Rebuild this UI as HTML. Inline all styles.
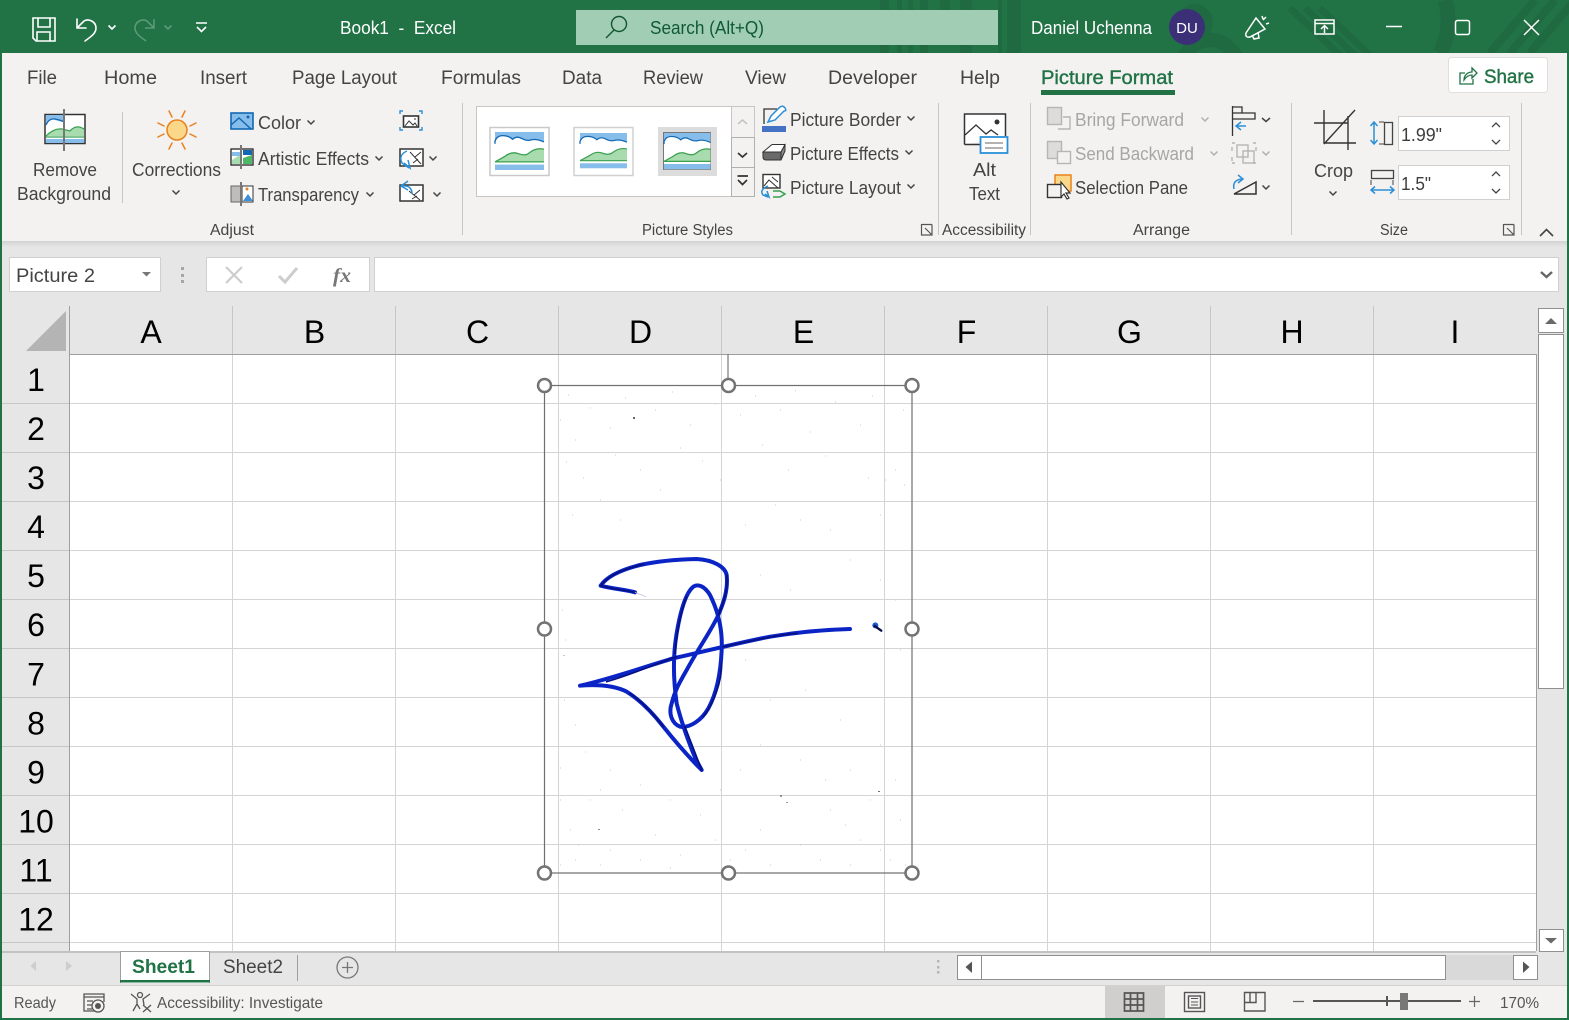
<!DOCTYPE html>
<html lang="en">
<head>
<meta charset="utf-8">
<title>Book1 - Excel</title>
<style>
html,body{margin:0;padding:0;background:#e6e6e6;width:1569px;height:1020px;overflow:hidden}
svg{display:block;font-family:"Liberation Sans",sans-serif}
text{white-space:pre}
.t{font-size:19px;fill:#444}
.r{font-size:18px;fill:#444}
.g{font-size:15.5px;fill:#444}
.d{font-size:18px;fill:#a6a6a6}
.h{font-size:32px;fill:#000;text-anchor:middle}
.w{font-size:18px;fill:#fff}
.s{font-size:16px;fill:#555}
</style>
</head>
<body>
<svg width="1569" height="1020" viewBox="0 0 1569 1020" xmlns="http://www.w3.org/2000/svg">
<defs>
<linearGradient id="shadow" x1="0" y1="0" x2="0" y2="1"><stop offset="0" stop-color="#d2d2d2"/><stop offset="1" stop-color="#e6e6e6"/></linearGradient>
<g id="thumb">
<rect x="0" y="0" width="50" height="42" fill="#fff"/>
<rect x="0" y="0" width="50" height="14" fill="#86bdea"/>
<path d="M0 14V10Q2 4 8 4T18 8Q22 4 27 7T36 9Q42 7 50 11V42H0Z" fill="#fff"/>
<path d="M0 13V10Q2 4 8 4T18 8Q22 4 27 7T36 9Q42 7 50 11" fill="none" stroke="#1268b3" stroke-width="1.400"/>
<path d="M0 33L10 27Q17 21 24 24T35 23Q42 17 50 19V33Z" fill="#a8dcae"/>
<path d="M0 33L10 27Q17 21 24 24T35 23Q42 17 50 19M0 33H50" fill="none" stroke="#38a04f" stroke-width="1.400"/>
<rect x="0" y="36" width="50" height="6" fill="#86bdea"/>
</g>
<symbol id="chev" viewBox="0 0 8 5" overflow="visible"><path d="M.5 .5L4 4L7.5 .5" fill="none" stroke="#444" stroke-width="1.500"/></symbol>
<symbol id="chevd" viewBox="0 0 8 5" overflow="visible"><path d="M.5 .5L4 4L7.5 .5" fill="none" stroke="#b0b0b0" stroke-width="1.500"/></symbol>
</defs>

<!-- base -->
<rect width="1569" height="1020" fill="#217346"/>
<!-- title pattern -->
<g fill="#1f6a41">
<rect x="880" y="0" width="9" height="53"/><rect x="897" y="0" width="5" height="53"/><rect x="908" y="0" width="5" height="53"/><rect x="920" y="0" width="8" height="53"/>
<rect x="940" y="0" width="10" height="18"/><rect x="960" y="0" width="12" height="53"/><rect x="998" y="0" width="4" height="53"/>
<rect x="1007" y="0" width="14" height="53"/>
<circle cx="1195" cy="22" r="18"/>
</g>
<g fill="none" stroke="#1f6a41">
<circle cx="1210" cy="68" r="28" stroke-width="14"/>
<path d="M1290 8L1345 60M1305 8L1360 60M1320 8L1375 60" stroke-width="7"/>
<path d="M1445 0A70 70 0 0 1 1440 53" stroke-width="15"/>
<path d="M1490 53L1535 0M1510 53L1555 0M1530 53L1575 0" stroke-width="8"/>
</g>

<!-- QAT -->
<g fill="none" stroke="#fff" stroke-width="1.600">
<path d="M33 18H55V41H36L33 38Z"/><path d="M38 18V27H50V18M37 41V32H50V41"/>
<path d="M77 19V28H86M78 27L84 21C89 18 96 22 96 28C96 33 92 36 85 41" stroke-linecap="round"/>
<path d="M108.500 25.500L112 29L115.500 25.500"/>
<g stroke="#5b9a78"><path d="M154 19V28H145M153 27L147 21C142 18 135 22 135 28C135 33 139 36 146 41"/><path d="M164.500 25.500L168 29L171.500 25.500"/></g>
<path d="M196 23H207M197 27L201.500 31.500L206 27"/>
</g>
<text class="w" x="340" y="34" textLength="116" lengthAdjust="spacingAndGlyphs">Book1  -  Excel</text>
<rect x="576" y="10" width="422" height="35" fill="#a0cdb3"/>
<g fill="none" stroke="#12552f" stroke-width="1.400"><circle cx="619" cy="24" r="7.500"/><path d="M614 30L606 38"/></g>
<text x="650" y="34" font-size="18" fill="#0f5a34" textLength="114" lengthAdjust="spacingAndGlyphs">Search (Alt+Q)</text>
<text class="w" x="1031" y="34" textLength="121" lengthAdjust="spacingAndGlyphs">Daniel Uchenna</text>
<circle cx="1187" cy="27" r="18" fill="#3b3078"/>
<text x="1187" y="33" font-size="15" fill="#fff" text-anchor="middle">DU</text>
<g fill="none" stroke="#fff" stroke-width="1.500">
<path d="M1246 33L1256 18L1265 29L1250 37Q1245 38 1246 33ZM1252 35L1254 39L1259 38L1258 32"/>
<path d="M1263 20L1266 17M1266 24L1269 23M1262 16L1263 19"/>
<path d="M1315 20H1334V34H1315ZM1315 23.500H1334M1324.500 33V26M1321 29L1324.500 25.500L1328 29"/>
<path d="M1386 26.500H1402"/>
<rect x="1455.500" y="20.500" width="14" height="14" rx="2"/>
<path d="M1524 20L1539 35M1539 20L1524 35"/>
</g>

<!-- ribbon -->
<rect x="2" y="53" width="1565" height="188" fill="#f3f2f1"/>
<rect x="2" y="241" width="1565" height="6" fill="url(#shadow)"/>
<rect x="2" y="247" width="1565" height="771" fill="#e6e6e6"/>

<text class="t" x="27" y="84" textLength="30" lengthAdjust="spacingAndGlyphs">File</text>
<text class="t" x="104" y="84" textLength="53" lengthAdjust="spacingAndGlyphs">Home</text>
<text class="t" x="200" y="84" textLength="47" lengthAdjust="spacingAndGlyphs">Insert</text>
<text class="t" x="292" y="84" textLength="105" lengthAdjust="spacingAndGlyphs">Page Layout</text>
<text class="t" x="441" y="84" textLength="80" lengthAdjust="spacingAndGlyphs">Formulas</text>
<text class="t" x="562" y="84" textLength="40" lengthAdjust="spacingAndGlyphs">Data</text>
<text class="t" x="643" y="84" textLength="60" lengthAdjust="spacingAndGlyphs">Review</text>
<text class="t" x="745" y="84" textLength="41" lengthAdjust="spacingAndGlyphs">View</text>
<text class="t" x="828" y="84" textLength="89" lengthAdjust="spacingAndGlyphs">Developer</text>
<text class="t" x="960" y="84" textLength="40" lengthAdjust="spacingAndGlyphs">Help</text>
<text x="1041" y="84" font-size="19" fill="#217346" stroke="#217346" stroke-width=".4" textLength="132" lengthAdjust="spacingAndGlyphs">Picture Format</text>
<rect x="1041" y="90" width="134" height="5" fill="#217346"/>
<rect x="1448.500" y="57.500" width="99" height="35" rx="3" fill="#fff" stroke="#e1dfdd"/>
<g fill="none" stroke="#217346" stroke-width="1.300"><path d="M1465 73H1460V84H1473V79"/><path d="M1464 80C1464 75 1468 72 1472 72V68L1477 73L1472 78V75C1469 75 1466 77 1464 80Z"/></g>
<text x="1484" y="83" font-size="19" fill="#217346" stroke="#217346" stroke-width=".4" textLength="50" lengthAdjust="spacingAndGlyphs">Share</text>

<!-- separators -->
<g stroke="#c8c6c4" stroke-width="1" fill="none">
<path d="M122.500 112V203M462.500 103V235M938.500 103V235M1030.500 103V235M1291.500 103V235M1521.500 103V235"/>
</g>

<!-- Remove background -->
<rect x="45" y="114.500" width="40" height="29" fill="#fff" stroke="#333" stroke-width="1.500"/>
<rect x="46" y="115" width="18" height="13" fill="#86bdea"/>
<path d="M46 124Q49 118 55 120T64 122V128H46Z" fill="#fff"/>
<path d="M46 125Q49 118 55 119T64 122" fill="none" stroke="#1268b3" stroke-width="1.200"/>
<path d="M46 136Q54 128 62 129L70 131Q76 124 84 129V136Z" fill="#a8dcae"/>
<path d="M46 136Q54 128 62 129L70 131Q76 124 84 129M46 137H84" fill="none" stroke="#38a04f" stroke-width="1.200"/>
<rect x="46" y="139" width="38" height="4" fill="#86bdea"/>
<rect x="63" y="109" width="2" height="42" fill="#777"/>
<text class="r" x="33" y="176" textLength="64" lengthAdjust="spacingAndGlyphs">Remove</text>
<text class="r" x="17" y="200" textLength="94" lengthAdjust="spacingAndGlyphs">Background</text>

<!-- Corrections -->
<circle cx="177" cy="130" r="10" fill="#fbd889" stroke="#e8821e" stroke-width="1.500"/>
<g stroke="#e8821e" stroke-width="1.500" stroke-linecap="round"><path d="M169 111L172 117M185 111L182 117M158 123L164 126M196 123L190 126M158 137L164 134M196 137L190 134M169 149L172 143M185 149L182 143"/></g>
<text class="r" x="132" y="176" textLength="89" lengthAdjust="spacingAndGlyphs">Corrections</text>
<use href="#chev" x="172" y="190" width="8" height="5"/>

<!-- Color etc -->
<rect x="231" y="113" width="22" height="16" fill="#86bdea" stroke="#1268b3" stroke-width="1.600"/>
<path d="M231 125L239 118L251 129" fill="none" stroke="#1268b3" stroke-width="1.400"/><circle cx="248" cy="117" r="1.500" fill="#1268b3"/>
<text class="r" x="258" y="129" textLength="43" lengthAdjust="spacingAndGlyphs">Color</text>
<use href="#chev" x="307" y="120" width="8" height="5"/>
<rect x="231" y="149" width="22" height="16" fill="#fff" stroke="#333" stroke-width="1.400"/>
<path d="M232 160L241 154V164H232Z" fill="#a8dcae"/><path d="M232 152H240V156H232Z" fill="#86bdea"/>
<path d="M243 150H252V155H243Z" fill="#1268b3"/><path d="M243 158L252 155V164H243Z" fill="#4fb866"/>
<rect x="240" y="145" width="2" height="24" fill="#777"/>
<text class="r" x="258" y="165" textLength="111" lengthAdjust="spacingAndGlyphs">Artistic Effects</text>
<use href="#chev" x="375" y="156" width="8" height="5"/>
<rect x="231" y="186" width="10" height="16" fill="#bdbdbd" stroke="#666"/>
<rect x="242" y="186" width="11" height="16" fill="#fff" stroke="#333"/>
<path d="M243 201L248 194L253 201Z" fill="#3d8fd6"/><circle cx="247" cy="189" r="1.500" fill="#e8821e"/>
<rect x="240" y="182" width="2" height="24" fill="#777"/>
<text class="r" x="258" y="201" textLength="101" lengthAdjust="spacingAndGlyphs">Transparency</text>
<use href="#chev" x="366" y="192" width="8" height="5"/>

<!-- right small icons -->
<rect x="403.500" y="116" width="15" height="11" fill="#fff" stroke="#333" stroke-width="1.600"/>
<path d="M405 126L409 121L413 125L415 123L417 126M414 119h2" fill="none" stroke="#333"/>
<path d="M400 114V111H403M419 111H422V114M400 127V130H403M419 130H422V127" fill="none" stroke="#2c8fd6" stroke-width="1.400"/>
<rect x="400" y="149" width="23" height="17" fill="#fff" stroke="#333" stroke-width="1.500"/>
<path d="M410 152L421 164M415 157L421 152M413 163L418 159" fill="none" stroke="#333"/>
<path d="M407 151Q398 155 402 163L409 168M404 163L410 168L408 160" fill="none" stroke="#2c8fd6" stroke-width="1.500"/>
<use href="#chev" x="429" y="156" width="8" height="5"/>
<rect x="400" y="185" width="23" height="16" fill="#fff" stroke="#333" stroke-width="1.500"/>
<path d="M409 191L420 200M414 195L420 190M412 199L417 196" fill="none" stroke="#333"/>
<path d="M408 181L401 186L408 190M402 186Q412 185 412 194" fill="none" stroke="#2c8fd6" stroke-width="1.500"/>
<use href="#chev" x="433" y="192" width="8" height="5"/>
<text class="g" x="210" y="235" textLength="44" lengthAdjust="spacingAndGlyphs">Adjust</text>

<!-- Gallery -->
<rect x="476.500" y="106.500" width="278" height="90" fill="#fff" stroke="#c8c6c4"/>
<rect x="731.500" y="106.500" width="23" height="31" fill="#f3f2f1" stroke="#c8c6c4"/>
<rect x="731.500" y="137.500" width="23" height="30" fill="#f3f2f1" stroke="#b0b0b0"/>
<rect x="731.500" y="167.500" width="23" height="29" fill="#f3f2f1" stroke="#b0b0b0"/>
<path d="M738 124L742.500 120L747 124" fill="none" stroke="#c0c0c0" stroke-width="1.500"/>
<path d="M738 153L742.500 157L747 153" fill="none" stroke="#333" stroke-width="1.700"/>
<path d="M737.500 176H748M738 180L742.500 184.500L747 180" fill="none" stroke="#333" stroke-width="1.700"/>

<rect x="490" y="127.500" width="59" height="48" fill="#fff" stroke="#c9c9c9" stroke-width="1.500"/>
<g transform="translate(495,132) scale(.98,.905)"><use href="#thumb"/></g>
<rect x="574" y="127.500" width="59" height="48" fill="#fff" stroke="#d0d0d0" stroke-width="1.500"/>
<g transform="translate(580,133) scale(.94,.84)"><use href="#thumb"/></g>
<rect x="658" y="127" width="59" height="49" fill="#dcdcdc"/>
<rect x="663.500" y="132.500" width="47" height="37" fill="#fff" stroke="#777"/>
<g transform="translate(664,133) scale(.93,.86)"><use href="#thumb"/></g>

<!-- Picture border etc -->
<rect x="762" y="126" width="24" height="6" fill="#4472c4"/>
<path d="M764 124V109H777" fill="none" stroke="#333" stroke-width="1.300"/>
<path d="M768 122L771 116L780 107Q783 105 785 108T784 111L775 120Z" fill="#fff" stroke="#2c8fd6" stroke-width="1.500"/>
<text class="r" x="790" y="126" textLength="111" lengthAdjust="spacingAndGlyphs">Picture Border</text>
<use href="#chev" x="907" y="116" width="8" height="5"/>
<path d="M763 152L772 144.500H785L781 152L772 153Z" fill="#fff" stroke="#333"/>
<path d="M763 152H781V160H766Q763 160 763 157Z" fill="#6a6a6a" stroke="#333"/>
<path d="M781 152L785 145V151L781 160Z" fill="#8a8a8a" stroke="#333"/>
<text class="r" x="790" y="160" textLength="109" lengthAdjust="spacingAndGlyphs">Picture Effects</text>
<use href="#chev" x="905" y="150" width="8" height="5"/>
<rect x="763" y="174.500" width="17" height="13.500" fill="#fff" stroke="#333" stroke-width="1.400"/>
<path d="M764 186L769 180L778 188M772 177L778 182" fill="none" stroke="#333"/>
<path d="M768 186Q759 190 763 195L768 197M765 194L769 197L767 191" fill="none" stroke="#2c8fd6" stroke-width="1.500"/>
<path d="M773 191H780L785 194L780 197H773" fill="none" stroke="#38a04f" stroke-width="1.500"/>
<text class="r" x="790" y="194" textLength="111" lengthAdjust="spacingAndGlyphs">Picture Layout</text>
<use href="#chev" x="907" y="184" width="8" height="5"/>
<text class="g" x="642" y="235" textLength="91" lengthAdjust="spacingAndGlyphs">Picture Styles</text>
<path d="M921.500 224.500H932M921.500 224V235H932V224.500M925 228L932 235M932 230V235H927" fill="none" stroke="#555" stroke-width="1.200"/>

<!-- Alt text -->
<path d="M964.500 144.500V114H1005.500V136M964.500 144.500H980" fill="#fff" stroke="#333" stroke-width="1.500"/>
<path d="M965 135L976 125L986 134L991 130L998 135" fill="none" stroke="#333" stroke-width="1.300"/>
<circle cx="997" cy="122" r="2.500" fill="#333"/>
<rect x="980.500" y="137" width="27" height="16" fill="#fff" stroke="#2c8fd6" stroke-width="1.800"/>
<path d="M985 143H1003M985 148H1003" stroke="#666"/>
<text class="r" x="973" y="176" textLength="23" lengthAdjust="spacingAndGlyphs">Alt</text>
<text class="r" x="969" y="200" textLength="31" lengthAdjust="spacingAndGlyphs">Text</text>
<text class="g" x="942" y="235" textLength="84" lengthAdjust="spacingAndGlyphs">Accessibility</text>

<!-- Arrange -->
<rect x="1047.500" y="107.500" width="14" height="17" fill="#dcdcdc" stroke="#b5b5b5" stroke-width="1.400"/>
<path d="M1058 129H1070V117H1063" fill="none" stroke="#b5b5b5" stroke-width="1.400"/>
<text class="d" x="1075" y="126" textLength="109" lengthAdjust="spacingAndGlyphs">Bring Forward</text>
<use href="#chevd" x="1201" y="117" width="8" height="5"/>
<rect x="1047.500" y="141.500" width="14" height="17" fill="#dcdcdc" stroke="#b5b5b5" stroke-width="1.400"/>
<rect x="1057.500" y="151.500" width="13" height="12" fill="#f3f2f1" stroke="#b5b5b5" stroke-width="1.400"/>
<text class="d" x="1075" y="160" textLength="119" lengthAdjust="spacingAndGlyphs">Send Backward</text>
<use href="#chevd" x="1210" y="151" width="8" height="5"/>
<rect x="1055" y="175" width="16" height="16" fill="#fbd889" stroke="#e8821e" stroke-width="1.500"/>
<rect x="1047.500" y="184.500" width="14" height="13" fill="#f3f2f1" stroke="#333" stroke-width="1.400"/>
<path d="M1061 182V197L1064 194L1067 199L1069 198L1066 193H1070Z" fill="#fff" stroke="#333" stroke-width="1.200"/>
<text class="r" x="1075" y="194" textLength="113" lengthAdjust="spacingAndGlyphs">Selection Pane</text>
<text class="g" x="1133" y="235" textLength="57" lengthAdjust="spacingAndGlyphs">Arrange</text>
<path d="M1232.500 106V136M1233 113H1242V107H1233M1233 119H1255V113H1233" fill="none" stroke="#333" stroke-width="1.300"/>
<path d="M1236 126H1246M1241 122L1236 126L1241 130" fill="none" stroke="#2c8fd6" stroke-width="1.500"/>
<path d="M1262 118L1266 121.500L1270 118" fill="none" stroke="#444" stroke-width="1.500"/>
<g fill="none" stroke="#b5b5b5" stroke-width="1.400"><rect x="1237" y="145" width="11" height="12"/><rect x="1243" y="151" width="11" height="12"/><path d="M1232 143h3M1253 143h3M1232 163h3M1253 163h3M1232 147v4M1232 157v4M1256 147v4"/></g>
<use href="#chevd" x="1262" y="151" width="8" height="5"/>
<path d="M1234 194L1256 182V194Z" fill="none" stroke="#333" stroke-width="1.500"/>
<path d="M1234 189Q1232 180 1242 179M1238 175L1243 179L1238 183" fill="none" stroke="#2c8fd6" stroke-width="1.500"/>
<use href="#chev" x="1262" y="185" width="8" height="5"/>

<!-- Size -->
<path d="M1314 123H1348M1348 116V150M1324 110V143H1356M1324 144L1355 110" fill="none" stroke="#333" stroke-width="1.400"/>
<text class="r" x="1314" y="177" textLength="39" lengthAdjust="spacingAndGlyphs">Crop</text>
<use href="#chev" x="1329" y="191" width="8" height="5"/>
<rect x="1384.500" y="122.500" width="8" height="22" fill="none" stroke="#444" stroke-width="1.300"/>
<path d="M1379 122H1384M1379 144H1384" stroke="#444"/>
<path d="M1374 123V143M1370.500 126L1374 122L1377.500 126M1370.500 140L1374 144L1377.500 140" fill="none" stroke="#2c8fd6" stroke-width="1.500"/>
<rect x="1371.500" y="170.500" width="22" height="8" fill="none" stroke="#444" stroke-width="1.300"/>
<path d="M1371 180V185M1393 180V185" stroke="#444"/>
<path d="M1372 190H1393M1375 186.500L1371 190L1375 193.500M1390 186.500L1394 190L1390 193.500" fill="none" stroke="#2c8fd6" stroke-width="1.500"/>
<rect x="1398.500" y="116.500" width="111" height="34" fill="#fff" stroke="#d0d0d0"/>
<rect x="1398.500" y="165.500" width="111" height="34" fill="#fff" stroke="#d0d0d0"/>
<text x="1401" y="141" font-size="18" fill="#3d3d3d" textLength="41" lengthAdjust="spacingAndGlyphs">1.99"</text>
<text x="1401" y="190" font-size="18" fill="#3d3d3d" textLength="30" lengthAdjust="spacingAndGlyphs">1.5"</text>
<path d="M1492 127L1496 123L1500 127M1492 140L1496 144L1500 140M1492 176L1496 172L1500 176M1492 189L1496 193L1500 189" fill="none" stroke="#444" stroke-width="1.300"/>
<text class="g" x="1380" y="235" textLength="28" lengthAdjust="spacingAndGlyphs">Size</text>
<path d="M1504 224.500H1514M1503.500 224V235H1514V224.500M1507 228L1514 235M1514 230V235H1509" fill="none" stroke="#555" stroke-width="1.200"/>
<path d="M1540 236L1546.500 229.500L1553 236" fill="none" stroke="#444" stroke-width="1.600"/>

<!-- formula bar -->
<rect x="9.500" y="257.500" width="151" height="34" fill="#fff" stroke="#d0d0d0"/>
<text x="16" y="282" font-size="19" fill="#444" textLength="79" lengthAdjust="spacingAndGlyphs">Picture 2</text>
<path d="M142 272H151L146.500 276.500Z" fill="#777"/>
<g fill="#a5a5a5"><rect x="181" y="267" width="3" height="3"/><rect x="181" y="274" width="3" height="3"/><rect x="181" y="280" width="3" height="3"/></g>
<rect x="206.500" y="257.500" width="163" height="34" fill="#fff" stroke="#d0d0d0"/>
<path d="M226 267L242 283M242 267L226 283" stroke="#cdcdcd" stroke-width="2.200" fill="none"/>
<path d="M279 276L285 282L297 268" stroke="#cdcdcd" stroke-width="3" fill="none"/>
<text x="333" y="282" font-size="20" font-family="Liberation Serif" font-style="italic" font-weight="bold" fill="#777" textLength="18" lengthAdjust="spacingAndGlyphs">fx</text>
<rect x="374.500" y="257.500" width="1184" height="34" fill="#fff" stroke="#d0d0d0"/>
<path d="M1541 272L1546.500 277L1552 272" fill="none" stroke="#666" stroke-width="2.400"/>

<!-- grid -->
<rect x="70" y="355" width="1466" height="596" fill="#fff"/>
<path d="M232.500 355V951M395.500 355V951M558.500 355V951M721.500 355V951M884.500 355V951M1047.500 355V951M1210.500 355V951M1373.500 355V951M70 403.500H1536M70 452.500H1536M70 501.500H1536M70 550.500H1536M70 599.500H1536M70 648.500H1536M70 697.500H1536M70 746.500H1536M70 795.500H1536M70 844.500H1536M70 893.500H1536M70 942.500H1536" stroke="#d4d4d4" fill="none"/>
<path d="M2 403.500H69M2 452.500H69M2 501.500H69M2 550.500H69M2 599.500H69M2 648.500H69M2 697.500H69M2 746.500H69M2 795.500H69M2 844.500H69M2 893.500H69M2 942.500H69M232.500 306V354M395.500 306V354M558.500 306V354M721.500 306V354M884.500 306V354M1047.500 306V354M1210.500 306V354M1373.500 306V354" stroke="#c6c6c6" fill="none"/>
<path d="M69.500 306V951M69 354.500H1536.500M1536.500 354V951" stroke="#9f9f9f" fill="none"/>
<path d="M26 351L66 311V351Z" fill="#b4b4b4"/>
<text class="h" x="151" y="343">A</text><text class="h" x="314.500" y="343">B</text><text class="h" x="477.500" y="343">C</text><text class="h" x="640.500" y="343">D</text><text class="h" x="803.500" y="343">E</text><text class="h" x="966.500" y="343">F</text><text class="h" x="1129.500" y="343">G</text><text class="h" x="1292" y="343">H</text><text class="h" x="1455" y="343">I</text>
<text class="h" x="36" y="391">1</text><text class="h" x="36" y="440">2</text><text class="h" x="36" y="489">3</text><text class="h" x="36" y="538">4</text><text class="h" x="36" y="587">5</text><text class="h" x="36" y="636">6</text><text class="h" x="36" y="685.500">7</text><text class="h" x="36" y="734.500">8</text><text class="h" x="36" y="783.500">9</text><text class="h" x="36" y="832.500">10</text><text class="h" x="36" y="881.500">11</text><text class="h" x="36" y="930.500">12</text>

<!-- speckles -->
<g fill="#b9b3bf" opacity=".75">
<rect x="633" y="417" width="2" height="2" fill="#333"/><rect x="598" y="829" width="2" height="1" fill="#666"/><rect x="780" y="795" width="2" height="2" fill="#777"/><rect x="786" y="802" width="2" height="1" fill="#777"/><rect x="878" y="791" width="2" height="1" fill="#444"/><rect x="563" y="655" width="2" height="1"/>
</g>
<path d="M560 420h1M575 440h1M610 428h1M655 410h1M690 425h1M740 415h1M780 410h1M810 432h1M860 425h1M895 470h1M885 480h1M564 700h1M585 752h1M600 790h1M622 810h1M570 830h1M655 835h1M700 815h1M745 850h1M830 810h1M860 840h1M805 690h1M770 700h1M840 720h1M880 745h1M745 660h1M900 650h1M575 860h1M640 860h1M820 860h1M890 860h1M600 500h1M660 490h1M720 480h1M800 520h1M850 560h1M568 395h1M590 408h1M625 398h1M672 392h1M715 404h1M755 396h1M795 391h1M835 402h1M872 396h1M903 410h1M566 462h1M583 478h1M615 455h1M640 470h1M680 448h1M702 461h1M762 445h1M788 470h1M825 456h1M868 478h1M904 485h1M572 515h1M620 520h1M745 525h1M775 505h1M830 530h1M880 515h1M760 575h1M790 590h1M880 580h1M895 600h1M562 610h1M565 640h1M575 725h1M560 768h1M590 800h1M610 770h1M640 785h1M670 800h1M720 790h1M740 770h1M760 745h1M800 760h1M825 780h1M850 770h1M870 800h1M900 820h1M895 780h1M560 800h1M578 845h1M610 850h1M680 855h1M715 840h1M760 830h1M800 845h1M845 825h1M880 850h1M905 865h1M560 865h1M600 865h1M670 868h1M730 860h1M770 865h1M850 865h1" stroke="#cfc8d0" stroke-width="1" fill="none"/>

<!-- signature -->
<g transform="translate(530,540) scale(.33333)" fill="none" stroke-linecap="round" stroke-linejoin="round">
<path d="M315 157C285 148 250 147 212 137C230 110 270 90 330 75C390 62 450 58 500 57C550 60 585 80 590 105C595 150 580 190 565 225C545 270 505 325 470 390C450 425 435 450 425 490C415 520 425 550 450 560C480 565 515 540 535 505C560 460 572 400 575 330C578 270 565 215 540 165C525 140 505 130 490 140C465 160 450 220 440 280C428 350 430 420 440 490C450 530 470 590 490 640C500 665 510 680 515 690C480 655 440 610 400 560C365 515 330 480 290 455C260 440 215 432 150 437C230 420 330 385 430 355C520 335 640 305 720 290C800 277 880 269 960 267" stroke="#0a24c6" stroke-width="12"/>
<path d="M315 157C280 150 250 147 212 137C240 100 290 85 340 73M515 690C500 650 480 600 465 560M400 560C365 515 335 485 300 460M230 425C300 405 370 375 440 350M580 320C650 305 740 285 800 280M575 370C575 430 550 490 520 530M470 170C450 220 440 280 435 340M590 105C595 150 580 190 565 225" stroke="#061080" stroke-width="5"/>
<path d="M315 157L348 170" stroke="#c8b4d8" stroke-width="2"/>
<circle cx="1036" cy="256" r="9" fill="#1a5fd0"/><path d="M1034 258L1054 272" stroke="#08104a" stroke-width="7"/>
</g>

<!-- selection -->
<path d="M728 354V385" stroke="#777" stroke-width="1.200"/>
<rect x="544.500" y="385.500" width="367.500" height="487.500" fill="none" stroke="#6f6f6f" stroke-width="1.200"/>
<g fill="#fff" stroke="#737373" stroke-width="2.500"><circle cx="544.500" cy="385.500" r="6.500"/><circle cx="728.500" cy="385.500" r="6.500"/><circle cx="912" cy="385.500" r="6.500"/><circle cx="544.500" cy="629" r="6.500"/><circle cx="912" cy="629" r="6.500"/><circle cx="544.500" cy="873" r="6.500"/><circle cx="728.500" cy="873" r="6.500"/><circle cx="912" cy="873" r="6.500"/></g>

<!-- vertical scrollbar -->
<rect x="1537" y="306" width="30" height="645" fill="#e6e6e6"/>
<rect x="1538.500" y="308.500" width="25" height="24" fill="#fff" stroke="#8f8f8f"/>
<path d="M1545 324L1551 318L1557 324Z" fill="#6a6a6a"/>
<rect x="1538.500" y="334.500" width="25" height="354" fill="#fff" stroke="#8f8f8f"/>
<rect x="1539.500" y="929.500" width="24" height="22" fill="#fff" stroke="#8f8f8f"/>
<path d="M1545 938H1557L1551 943.500Z" fill="#6a6a6a"/>

<!-- tabs -->
<rect x="2" y="951.500" width="1534" height="1" fill="#9f9f9f"/>
<path d="M36 961V971L30.500 966ZM66 961V971L72 966Z" fill="#cdcdcd"/>
<path d="M120.500 983V951.500H209.500V983" fill="#fff" stroke="#9f9f9f"/>
<rect x="120" y="980" width="90" height="2.500" fill="#217346"/>
<text x="132" y="973" font-size="19" font-weight="bold" fill="#217346" textLength="63" lengthAdjust="spacingAndGlyphs">Sheet1</text>
<text x="223" y="973" font-size="19" fill="#444" textLength="60" lengthAdjust="spacingAndGlyphs">Sheet2</text>
<path d="M297.500 955V981" stroke="#9f9f9f"/>
<circle cx="347.500" cy="967.500" r="10.500" fill="none" stroke="#767676" stroke-width="1.300"/>
<path d="M342 967.500H353M347.500 962V973" stroke="#767676" stroke-width="1.300"/>
<g fill="#b5b5b5"><rect x="937" y="960" width="2.500" height="2.500"/><rect x="937" y="966" width="2.500" height="2.500"/><rect x="937" y="971" width="2.500" height="2.500"/></g>
<rect x="1445" y="955" width="68" height="25" fill="#d9d9d9"/>
<rect x="957.500" y="955.500" width="24" height="24" fill="#fff" stroke="#8f8f8f"/>
<path d="M972 961.500V973L965.500 967Z" fill="#555"/>
<rect x="981.500" y="955.500" width="464" height="24" fill="#fff" stroke="#8f8f8f"/>
<rect x="1513.500" y="955.500" width="24" height="24" fill="#fff" stroke="#8f8f8f"/>
<path d="M1523 961.500V973L1529.500 967Z" fill="#555"/>

<!-- status -->
<rect x="2" y="985" width="1565" height="33" fill="#f3f2f1"/>
<rect x="2" y="985" width="1565" height="1" fill="#d2d2d2"/>
<rect x="1105" y="986" width="60" height="32" fill="#d0cfcd"/>
<text class="s" x="14" y="1008" textLength="42" lengthAdjust="spacingAndGlyphs">Ready</text>
<g fill="none" stroke="#555" stroke-width="1.300"><path d="M84 994H104V997H84ZM84 997V1011H94M104 997V1002M87 1001H93M87 1005H92M87 1009H92"/><circle cx="98" cy="1006" r="6"/></g><circle cx="98" cy="1006" r="3" fill="#555"/>
<g fill="none" stroke="#555" stroke-width="1.300"><circle cx="140" cy="995" r="2.500"/><path d="M131 994L137 999V1004L133 1011M150 994L143 999L144 1005M137 1004L140 1009"/><path d="M143 1005L151 1012M151 1005L143 1012"/></g>
<text class="s" x="157" y="1008" textLength="166" lengthAdjust="spacingAndGlyphs">Accessibility: Investigate</text>
<g fill="none" stroke="#555" stroke-width="1.400" transform="translate(0,.5)">
<path d="M1124.500 992.500H1143.500V1010.500H1124.500ZM1124.500 998.500H1143.500M1124.500 1004.500H1143.500M1130.500 992.500V1010.500M1137.500 992.500V1010.500" stroke-width="1.700"/>
<rect x="1184.500" y="992" width="20" height="19"/><rect x="1188.500" y="995.500" width="12" height="12"/><path d="M1191 998H1198M1191 1001.500H1198M1191 1004.500H1198" stroke-width="1"/>
<path d="M1244.500 992H1265V1010.500H1244.500ZM1244.500 1002H1256V992M1250 992V1002"/>
</g>
<path d="M1293 1001.500H1304M1469 1001.500H1480M1474.500 996V1007" stroke="#666" stroke-width="1.200"/>
<rect x="1313" y="1000" width="148" height="2" fill="#555"/>
<rect x="1386" y="996" width="2" height="10" fill="#555"/>
<rect x="1400" y="993" width="8" height="17" fill="#787878"/>
<text class="s" x="1500" y="1008" textLength="39" lengthAdjust="spacingAndGlyphs">170%</text>

<!-- frame -->
<rect x="0" y="53" width="2" height="967" fill="#217346"/>
<rect x="1567" y="53" width="2" height="967" fill="#217346"/>
<rect x="0" y="1018" width="1569" height="2" fill="#217346"/>
</svg>
</body>
</html>
